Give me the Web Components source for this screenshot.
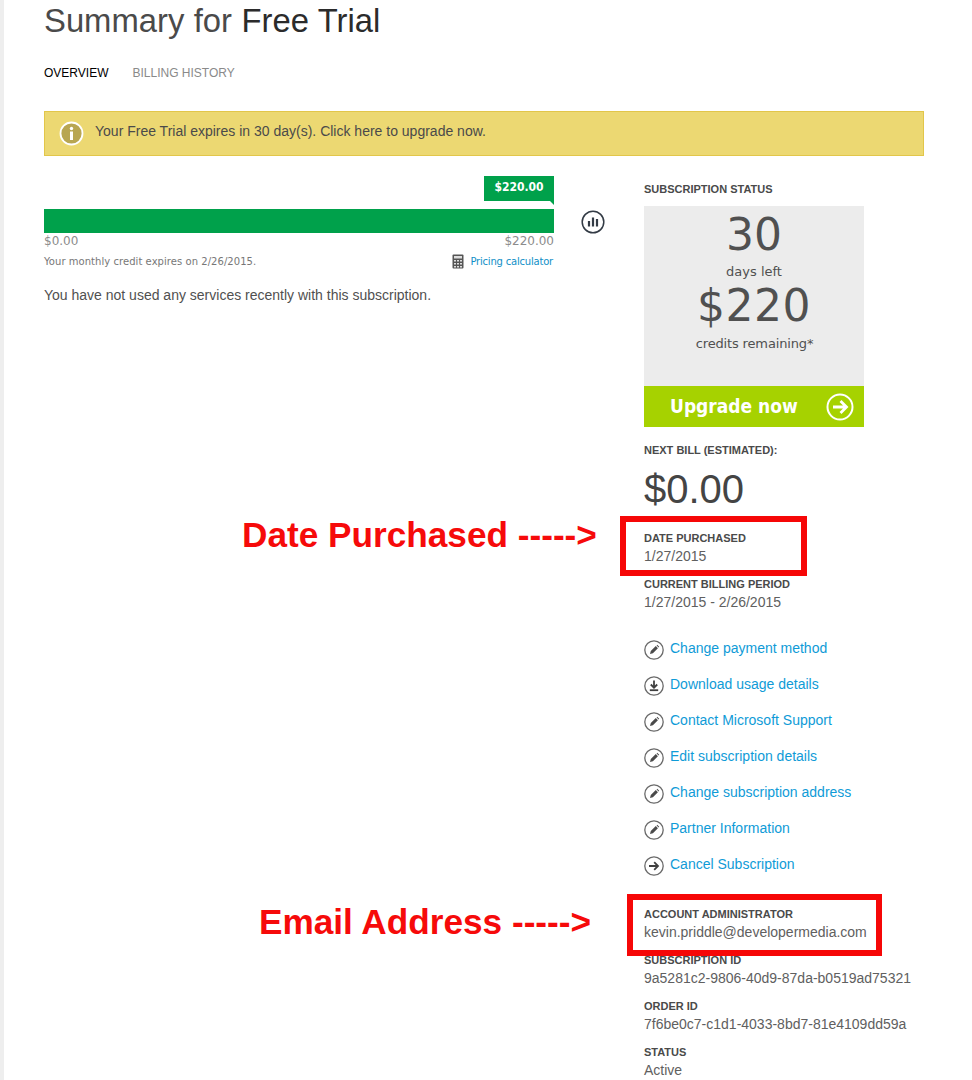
<!DOCTYPE html>
<html lang="en"><head><meta charset="utf-8"><title>Summary for Free Trial</title>
<style>
html,body{margin:0;padding:0;background:#fff}
body{font-family:"Liberation Sans",Arial,sans-serif;color:#505050}
</style></head><body>
<summary-page></summary-page>
<script>
const ICONS={
pencil:'<circle cx="10" cy="10" r="9.200" fill="none" stroke="#6a6a6a" stroke-width="1.300"/><path d="M6 14l.8-2.900 5-5 2.100 2.100-5 5zM12.600 5.400l.6-.6 2 2-.6.6z" fill="#4a4a4a"/>',
download:'<circle cx="10" cy="10" r="9.200" fill="none" stroke="#6a6a6a" stroke-width="1.300"/><path d="M10 4.500v6.800M6.800 8.500l3.200 3.200 3.200-3.200" fill="none" stroke="#404040" stroke-width="1.800"/><path d="M5.800 14.200h8.400" stroke="#404040" stroke-width="1.800"/>',
arrow:'<circle cx="10" cy="10" r="9.200" fill="none" stroke="#6a6a6a" stroke-width="1.300"/><path d="M5 10h9M10.200 6.200L14 10l-3.800 3.800" fill="none" stroke="#404040" stroke-width="1.800"/>'
};
function def(name,html){
  customElements.define(name,class extends HTMLElement{
    constructor(){super();this.attachShadow({mode:'open'}).innerHTML=typeof html==='function'?html(this):html;}
  });
}
def('page-title',`<style>:host{display:block;font-size:32.800px;line-height:40px;height:40px;padding-top:1px;word-spacing:.3px}b{font-weight:400;color:#2b2b2b}span{color:#4a4a4a}</style><span>Summary for</span> <b>Free Trial</b>`);
def('tab-bar',`<style>:host{display:flex;gap:24px;font-size:12px;line-height:14px;margin-top:25px;color:#000}span+span{color:#8a8a8a}</style><span>OVERVIEW</span><span>BILLING HISTORY</span>`);
def('trial-banner',`<style>:host{display:flex;align-items:center;box-sizing:border-box;height:45px;margin-top:31px;background:#ecd872;border:1px solid #e2c64a;padding:0 0 5px 14px;font-size:14px;color:#4a4a4a}svg{margin-right:11px;margin-top:5px;flex:none}</style>
<svg width="25" height="25" viewBox="0 0 25 25"><circle cx="12.500" cy="12.500" r="11" fill="#b8a652" stroke="#fff" stroke-width="1.800"/><circle cx="12.500" cy="7.500" r="1.700" fill="#fff"/><rect x="11" y="10.500" width="3" height="8.500" fill="#fff"/></svg><span>Your Free Trial expires in 30 day(s). Click here to upgrade now.</span>`);
def('credit-meter',`<style>
:host{display:block;width:510px;font-family:"DejaVu Sans",sans-serif;position:relative}
.tag{margin-left:auto;width:70px;height:25px;background:#00a14b;color:#fff;font-size:12px;font-stretch:condensed;font-weight:700;display:flex;align-items:center;justify-content:center;position:relative;box-sizing:border-box;padding-bottom:3px}
.tag::after{content:"";position:absolute;right:0;top:100%;width:0;height:0;border-left:4px solid transparent;border-top:4px solid #00a14b}
.bar{height:24px;background:#00a14b;margin-top:8px}
.vals{display:flex;justify-content:space-between;font-size:12px;line-height:14px;color:#8c8c8c;margin-top:1px}
.foot{display:flex;justify-content:space-between;align-items:center;font-size:10px;line-height:15px;color:#777;margin-top:6px;letter-spacing:.05px}
.calc{display:flex;align-items:center;gap:6px;color:#0f8fc7;letter-spacing:-.2px;padding-right:1px}
</style>
<div class="tag">$220.00</div><div class="bar"></div>
<div class="vals"><span>$0.00</span><span>$220.00</span></div>
<div class="foot"><span>Your monthly credit expires on 2/26/2015.</span><span class="calc"><svg width="12" height="15" viewBox="0 0 12 15"><rect x=".5" y=".5" width="11" height="14" rx="1" fill="#555"/><rect x="2" y="2" width="8" height="2.500" fill="#ddd"/><g fill="#ddd"><rect x="2" y="6" width="2" height="1.500"/><rect x="5" y="6" width="2" height="1.500"/><rect x="8" y="6" width="2" height="1.500"/><rect x="2" y="9" width="2" height="1.500"/><rect x="5" y="9" width="2" height="1.500"/><rect x="8" y="9" width="2" height="1.500"/><rect x="2" y="12" width="2" height="1.500"/><rect x="5" y="12" width="2" height="1.500"/><rect x="8" y="12" width="2" height="1.500"/></g></svg>Pricing calculator</span></div>`);
def('status-card',`<style>
:host{display:block;width:220px;font-family:"DejaVu Sans",sans-serif;color:#505050;text-align:center}
.box{background:#ececec;height:180px;box-sizing:border-box;padding-top:4px}
.big{font-size:44px;line-height:50px}
.amt{letter-spacing:.5px}
.small{font-size:13px;line-height:18px}
.d{margin-top:3px}
.cr{margin-top:4px;letter-spacing:-.15px;padding-left:1px}
.cta{height:41px;background:#a6d200;color:#fff;display:flex;align-items:center;justify-content:flex-end;position:relative;padding-right:10px;box-sizing:border-box}
.cta span{font-size:19px;font-stretch:condensed;font-weight:700;position:absolute;left:26px;top:6px;line-height:28px}
</style>
<div class="box"><div class="big">30</div><div class="small d">days left</div><div class="big amt">$220</div><div class="small cr">credits remaining*</div></div>
<div class="cta"><span>Upgrade now</span><svg width="28" height="28" viewBox="0 0 28 28"><circle cx="14" cy="14" r="12.500" fill="none" stroke="#fff" stroke-width="2"/><path d="M7 14h13M14.500 8l6 6-6 6" fill="none" stroke="#fff" stroke-width="2.800"/></svg></div>`);
def('info-field',`<style>:host{display:block;font-size:14px;line-height:22px;color:#606060}
.l{font-size:11px;line-height:14px;font-weight:700;color:#4a4a4a}</style>
<div class="l"><slot name="label"></slot></div><div><slot></slot></div>`);
def('action-link',el=>`<style>:host{display:flex;align-items:center;gap:6px;height:36px;font-size:14px;color:#0f9bd7}svg{flex:none;margin-top:4px}span{margin-top:-1px}</style>
<svg width="20" height="20" viewBox="0 0 20 20">${ICONS[el.getAttribute('icon')]||ICONS.pencil}</svg><span><slot></slot></span>`);
def('red-note',`<style>:host{position:absolute;left:var(--x);top:var(--y);color:#f60a0a;font-weight:700;font-size:35.200px;line-height:36px;white-space:nowrap}</style><slot></slot>`);
def('red-box',`<style>:host{position:absolute;box-sizing:border-box;left:var(--x);top:var(--y);width:var(--w);height:var(--h);border:6px solid #f60707}</style>`);
def('summary-page',`<style>
:host{display:block;box-sizing:border-box;height:1080px;overflow:hidden;position:relative;border-left:4px solid #eee;padding-left:40px;padding-right:48px}
.cols{display:flex;margin-top:20px}
.left{width:510px;flex:none}
.chart{width:26px;margin:34px 0 0 27px;flex:none}
.right{margin-left:37px;width:280px;flex:none}
.msg{font-size:14px;line-height:18px;color:#505050;margin-top:17px}
.h{font-size:11px;line-height:14px;font-weight:700;color:#4a4a4a}
.bill{font-size:40px;line-height:46px;color:#444;margin-top:9px}
.links{margin-top:17px}
info-field.g{margin-top:10px}
</style>
<page-title></page-title><tab-bar></tab-bar><trial-banner></trial-banner>
<div class="cols">
<div class="left"><credit-meter></credit-meter><div class="msg">You have not used any services recently with this subscription.</div></div>
<div class="chart"><svg width="24" height="24" viewBox="0 0 24 24"><circle cx="12" cy="12" r="10.800" fill="none" stroke="#333b45" stroke-width="1.500"/><path d="M8 11v5.500M12 7.500v9M16 9v7.500" stroke="#333b45" stroke-width="2.200" fill="none"/></svg></div>
<div class="right">
<div class="h" style="margin-top:6px;margin-bottom:10px">SUBSCRIPTION STATUS</div>
<status-card></status-card>
<div class="h" style="margin-top:16px">NEXT BILL (ESTIMATED):</div>
<div class="bill">$0.00</div>
<info-field style="margin-top:19px"><span slot="label">DATE PURCHASED</span>1/27/2015</info-field>
<info-field class="g"><span slot="label">CURRENT BILLING PERIOD</span>1/27/2015 - 2/26/2015</info-field>
<div class="links">
<action-link icon="pencil">Change payment method</action-link>
<action-link icon="download">Download usage details</action-link>
<action-link icon="pencil">Contact Microsoft Support</action-link>
<action-link icon="pencil">Edit subscription details</action-link>
<action-link icon="pencil">Change subscription address</action-link>
<action-link icon="pencil">Partner Information</action-link>
<action-link icon="arrow">Cancel Subscription</action-link>
</div>
<info-field style="margin-top:25px"><span slot="label">ACCOUNT ADMINISTRATOR</span>kevin.priddle@developermedia.com</info-field>
<info-field class="g"><span slot="label">SUBSCRIPTION ID</span>9a5281c2-9806-40d9-87da-b0519ad75321</info-field>
<info-field class="g"><span slot="label">ORDER ID</span>7f6be0c7-c1d1-4033-8bd7-81e4109dd59a</info-field>
<info-field class="g"><span slot="label">STATUS</span>Active</info-field>
</div></div>
<red-note style="--x:238px;--y:517px">Date Purchased -----&gt;</red-note>
<red-note style="--x:255px;--y:904px">Email Address -----&gt;</red-note>
<red-box style="--x:616px;--y:516px;--w:187px;--h:60px"></red-box>
<red-box style="--x:623px;--y:894px;--w:255px;--h:62px"></red-box>
`);
</script>
</body></html>
